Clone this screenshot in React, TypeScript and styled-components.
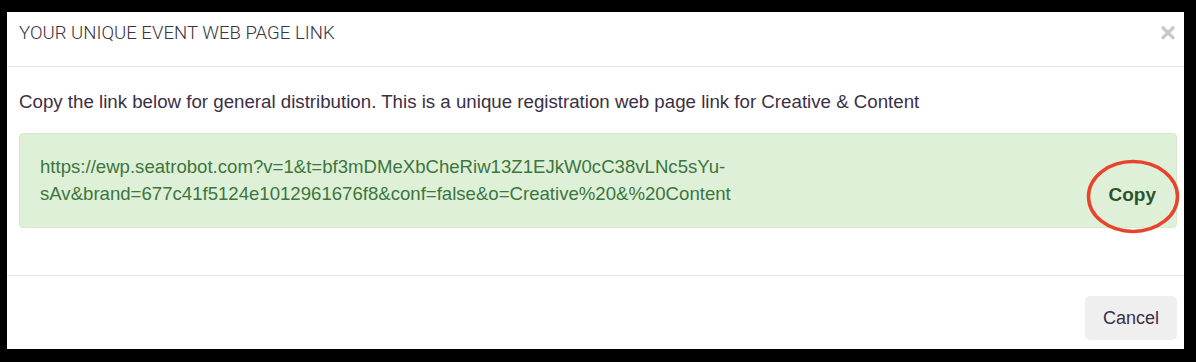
import React from "react";
import styled, { createGlobalStyle } from "styled-components";

const Global = createGlobalStyle`
  html, body { margin: 0; padding: 0; background: #000; }
  body { width: 1196px; height: 362px; overflow: hidden; }
`;

const Stage = styled.div`
  padding: 12px 12px 0 7px;
  width: 1196px;
  height: 362px;
  box-sizing: border-box;
`;

const Modal = styled.div`
  width: 1177px;
  height: 337px;
  background: #fff;
  display: flex;
  flex-direction: column;
  overflow: hidden;
`;

const Header = styled.div`
  height: 55px;
  border-bottom: 1px solid #e5e5e5;
  display: flex;
  align-items: flex-start;
  justify-content: space-between;
  padding: 10px 8px 0 12px;
  box-sizing: border-box;
  flex: none;
`;

const Title = styled.h4`
  margin: 0;
  font-family: Roboto, "Liberation Sans", sans-serif;
  font-weight: 300;
  font-size: 18.6px;
  line-height: 22px;
  color: #3a3340;
`;

const Close = styled.span`
  font-family: "Liberation Sans", Arial, sans-serif;
  font-weight: 700;
  font-size: 28px;
  line-height: 20px;
  color: #c8c8c8;
  margin-top: 1px;
`;

const Body = styled.div`
  padding: 22px 7px 0 12px;
  height: 209px;
  box-sizing: border-box;
  border-bottom: 1px solid #e5e5e5;
  flex: none;
`;

const Lead = styled.p`
  margin: 0 0 18px;
  font-family: "Liberation Sans", Arial, sans-serif;
  font-size: 18.7px;
  line-height: 26px;
  color: #3b2f45;
`;

const Alert = styled.div`
  background: #dff0d8;
  border: 1px solid #d6e9c6;
  border-radius: 4px;
  padding: 15px 20px;
  height: 95px;
  box-sizing: border-box;
  display: flex;
  align-items: flex-start;
  justify-content: space-between;
`;

const LinkText = styled.div`
  width: 760px;
  padding-top: 4px;
  font-family: "Liberation Sans", Arial, sans-serif;
  font-size: 18.6px;
  line-height: 27px;
  color: #3c763d;
  word-wrap: break-word;
`;

const CopyButton = styled.button`
  position: relative;
  align-self: flex-end;
  margin: 0;
  background: none;
  border: none;
  padding: 9px 0 7px;
  font-family: "Liberation Sans", Arial, sans-serif;
  font-weight: 700;
  font-size: 19px;
  line-height: 21px;
  color: #2b542c;
  cursor: pointer;
`;

const Ring = styled.svg`
  position: absolute;
  left: -22px;
  top: -15px;
  width: 92px;
  height: 73px;
  pointer-events: none;
  overflow: visible;
`;

const Footer = styled.div`
  flex: 1;
  display: flex;
  justify-content: flex-end;
  align-items: flex-start;
  padding: 20px 7px 0 0;
`;

const CancelButton = styled.button`
  width: 92px;
  height: 44px;
  background: #efefef;
  border: none;
  border-radius: 5px;
  font-family: "Liberation Sans", Arial, sans-serif;
  font-size: 18px;
  color: #3b2f45;
  cursor: pointer;
`;

export default function App() {
  return (
    <>
      <Global />
      <Stage>
        <Modal>
          <Header>
            <Title>YOUR UNIQUE EVENT WEB PAGE LINK</Title>
            <Close>×</Close>
          </Header>
          <Body>
            <Lead>
              Copy the link below for general distribution. This is a unique registration web page link for Creative &amp; Content
            </Lead>
            <Alert>
              <LinkText>
                https://ewp.seatrobot.com?v=1&amp;t=bf3mDMeXbCheRiw13Z1EJkW0cC38vLNc5sYu-sAv&amp;brand=677c41f5124e1012961676f8&amp;conf=false&amp;o=Creative%20&amp;%20Content
              </LinkText>
              <CopyButton>
                Copy
                <Ring viewBox="0 0 92 73">
                  <ellipse cx="46" cy="36.5" rx="44.5" ry="35" fill="none" stroke="#e8432b" strokeWidth="3.5" />
                </Ring>
              </CopyButton>
            </Alert>
          </Body>
          <Footer>
            <CancelButton>Cancel</CancelButton>
          </Footer>
        </Modal>
      </Stage>
    </>
  );
}
